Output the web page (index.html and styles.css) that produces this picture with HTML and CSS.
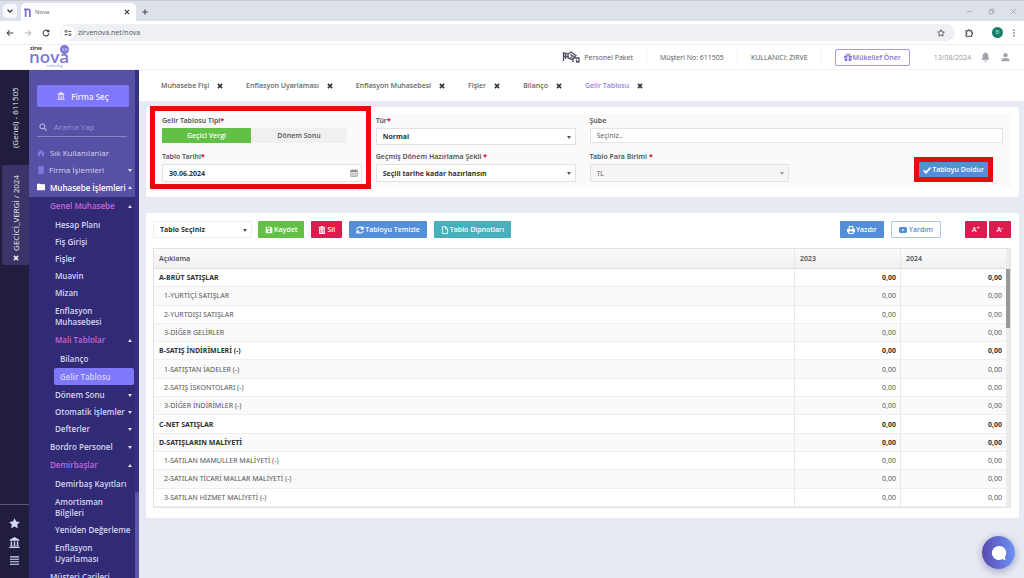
FILE: index.html
```html
<!DOCTYPE html>
<html lang="tr">
<head>
<meta charset="utf-8">
<title>Nova</title>
<link rel="stylesheet" href="styles.css">
</head>
<body>
<svg class="sprite" aria-hidden="true">
  <symbol id="bank" viewBox="0 0 16 16"><path d="M8 0 15 4v1.5H1V4zM2.5 6.500h2V12h-2zM7 6.500h2V12H7zM11.500 6.500h2V12h-2zM1.500 12.500h13v1H1.500zM.5 14.300h15V16H.5z"/></symbol>
  <symbol id="x" viewBox="0 0 10 10"><path d="M1.500 1.500l7 7M8.500 1.500l-7 7" fill="none" stroke="currentColor" stroke-width="2.600"/></symbol>
</svg>

<div class="strip">
  <button class="tab-search" aria-label="Sekme ara"><svg viewBox="0 0 10 10"><path d="M2 3.500l3 3 3-3" fill="none" stroke="currentColor" stroke-width="1.600"/></svg></button>
  <div class="btab">
    <svg class="favicon" viewBox="0 0 8 10"><path d="M0 1.500h5a1.700 1.700 0 0 1 1.700 1.700V10M1.900 10V1.500" fill="none" stroke="#7d72cf" stroke-width="2"/></svg>
    <span class="btab-title">Nova</span>
    <button aria-label="Sekmeyi kapat"><svg class="i6" viewBox="0 0 10 10"><path d="M1.500 1.500l7 7M8.500 1.500l-7 7" stroke="currentColor" stroke-width="1.800"/></svg></button>
  </div>
  <button class="newtab" aria-label="Yeni sekme"><svg class="i6" viewBox="0 0 10 10"><path d="M5 .5v9M.5 5h9" stroke="currentColor" stroke-width="1.500"/></svg></button>
  <div class="winctl">
    <button aria-label="Simge durumu"><svg viewBox="0 0 10 10"><path d="M1 5h8" stroke="currentColor"/></svg></button>
    <button aria-label="Geri yükle"><svg viewBox="0 0 10 10"><path d="M1.500 3.500h5v5h-5zM3.500 3.500v-2h5v5h-2" fill="none" stroke="currentColor"/></svg></button>
    <button aria-label="Kapat"><svg viewBox="0 0 10 10"><path d="M1 1l8 8M9 1l-8 8" stroke="currentColor"/></svg></button>
  </div>
</div>

<div class="toolbar">
  <button aria-label="Geri"><svg viewBox="0 0 12 12"><path d="M11 6H2M5.500 2 1.700 6l3.800 4" fill="none" stroke="currentColor" stroke-width="1.600"/></svg></button>
  <button class="dim" aria-label="İleri"><svg viewBox="0 0 12 12"><path d="M1 6h9M6.500 2l3.800 4-3.800 4" fill="none" stroke="currentColor" stroke-width="1.600"/></svg></button>
  <button aria-label="Yenile"><svg viewBox="0 0 12 12"><path d="M10.300 6.500A4.300 4.300 0 1 1 9 2.900l1 1M10.500 1v3.200H7.300" fill="none" stroke="currentColor" stroke-width="1.600"/></svg></button>
  <div class="omni">
    <span class="site"><svg viewBox="0 0 12 12"><path d="M6.500 3.500H11M1 8.500h4.500" stroke="currentColor" stroke-width="1.500"/><circle cx="3" cy="3.500" r="1.500" fill="none" stroke="currentColor" stroke-width="1.300"/><circle cx="9" cy="8.500" r="1.500" fill="none" stroke="currentColor" stroke-width="1.300"/></svg></span>
    <input aria-label="Adres" value="zirvenova.net/nova">
    <button aria-label="Yer işareti"><svg viewBox="0 0 12 12"><path d="M6 1l1.500 3.300 3.600.4-2.700 2.400.8 3.600L6 8.900l-3.200 1.800.8-3.600L.9 4.700l3.600-.4z" fill="none" stroke="currentColor" stroke-width="1.200"/></svg></button>
  </div>
  <button class="ext" aria-label="Uzantılar"><svg viewBox="0 0 12 12"><path d="M1.500 2.800h2.800a1.500 1.500 0 0 1 3 0H10v2.500a1.500 1.500 0 0 1 0 3V11H1.500V8.300a1.400 1.400 0 0 0 0-2.800z" fill="none" stroke="currentColor" stroke-width="1.600"/></svg></button>
  <span class="avatar">B</span>
  <button class="dots" aria-label="Menü"><svg viewBox="0 0 12 12"><circle cx="6" cy="2" r="1.100"/><circle cx="6" cy="6" r="1.100"/><circle cx="6" cy="10" r="1.100"/></svg></button>
</div>

<header class="top">
  <div class="logo"><span class="l-small">zirve</span><span class="l-big">nova</span><span class="l-badge">2.0</span><span class="l-tag">teknoloji</span></div>
  <div class="topinfo">
    <span class="cell"><svg class="plane" viewBox="0 0 18 12"><path d="M1.500 1v9M3.500 2v6M1 2.500h4.500M1 5.500h6M6 3l3-2 5 3.500-4 4-4-1.500zM8 3.500l3 1.500-3 2M12 7h5v4h-2.500V8.500M11 8v3" fill="none" stroke="#55505f" stroke-width="1.300"/></svg>Personel Paket</span>
    <span class="cell">Müşteri No: 611505</span>
    <span class="cell">KULLANICI: ZIRVE</span>
    <span class="cell"><button class="suggest"><svg viewBox="0 0 12 12"><path d="M0 4h5v3H0zM7 4h5v3H7zM1 8h4v4H1zM7 8h4v4H7z"/><path d="M6 4C4 4 2 3 3 1.500S6 2 6 4c0-2 2-4 3-2.500S8 4 6 4" fill="none" stroke="currentColor" stroke-width="1.200"/></svg>Mükellef Öner</button></span>
    <span class="date">13/08/2024</span>
    <button class="ico" aria-label="Bildirimler"><svg viewBox="0 0 12 14"><path d="M6 0l1 1.400C9.200 2 10 3.800 10 6c0 3 .7 4 2 5H0c1.300-1 2-2 2-5 0-2.200.8-4 3-4.600zM4.300 12h3.400a1.700 1.700 0 0 1-3.400 0z"/></svg></button>
    <button class="ico" aria-label="Profil"><svg viewBox="0 0 12 14"><circle cx="6" cy="4.500" r="3"/><path d="M0 13c0-3.500 2.500-4.500 6-4.500s6 1 6 4.500z"/></svg></button>
  </div>
</header>

<div class="app">
  <aside class="rail">
    <a href="#" class="vert">(Genel) - 611505</a>
    <div class="vtab"><a href="#" class="vert">GECİCİ_VERGİ / 2024</a><button aria-label="Kapat"><svg class="i6"><use href="#x"/></svg></button></div>
    <div class="railicons">
      <button aria-label="Favoriler"><svg viewBox="0 0 12 12"><path d="M6 .2l1.800 3.700 4.100.5-3 2.800.8 4.100L6 9.300l-3.700 2 .8-4.100-3-2.800 4.100-.5z"/></svg></button>
      <button aria-label="Firmalar"><svg><use href="#bank"/></svg></button>
      <button aria-label="Menü"><svg viewBox="0 0 12 12"><path d="M1 2h10M1 4.700h10M1 7.400h10M1 10.100h10" stroke="currentColor" stroke-width="1.200"/></svg></button>
    </div>
  </aside>

  <nav class="side">
    <div class="sidetop">
      <button class="firm"><svg><use href="#bank"/></svg>Firma Seç</button>
      <label class="search"><svg viewBox="0 0 12 12"><circle cx="5" cy="5" r="3.700" fill="none" stroke="currentColor" stroke-width="1.500"/><path d="M7.800 7.800l3.500 3.500" stroke="currentColor" stroke-width="1.700"/></svg><input placeholder="Arama Yap" aria-label="Arama Yap"></label>
      <a href="#" class="root"><svg viewBox="0 0 12 12"><path d="M6 1l6 5.500h-1.500V11H7.500V8h-3v3h-3V6.500H0z"/></svg>Sık Kullanılanlar</a>
      <a href="#" class="root tight down"><svg viewBox="0 0 12 12"><path d="M2 0h8v12H2z"/></svg>Firma İşlemleri</a>
      <a href="#" class="root on up"><svg viewBox="0 0 12 12"><path d="M0 1h5l1 1h6v9H0z"/></svg>Muhasebe İşlemleri</a>
    </div>
    <div class="menu">
      <a href="#" class="l1 pink up">Genel Muhasebe</a>
      <div class="sub">
        <a href="#">Hesap Planı</a><a href="#">Fiş Girişi</a><a href="#">Fişler</a><a href="#">Muavin</a><a href="#">Mizan</a>
        <a href="#" class="two">Enflasyon<br>Muhasebesi</a>
        <a href="#" class="two pink up">Mali Tablolar</a>
        <div class="sub2"><a href="#">Bilanço</a><a href="#" class="active">Gelir Tablosu</a></div>
        <a href="#" class="down">Dönem Sonu</a><a href="#" class="down">Otomatik İşlemler</a><a href="#" class="down">Defterler</a>
      </div>
      <a href="#" class="l1 down">Bordro Personel</a>
      <a href="#" class="l1 pink up">Demirbaşlar</a>
      <div class="sub">
        <a href="#">Demirbaş Kayıtları</a><a href="#" class="two">Amortisman<br>Bilgileri</a><a href="#">Yeniden Değerleme</a><a href="#" class="two">Enflasyon<br>Uyarlaması</a>
      </div>
      <a href="#" class="l1">Müşteri Carileri</a>
    </div>
    <div class="sidebar-scroll"><i></i></div>
  </nav>

  <main>
    <div class="tabs">
      <span><a href="#">Muhasebe Fişi</a><button aria-label="Kapat"><svg class="i6"><use href="#x"/></svg></button></span>
      <span><a href="#">Enflasyon Uyarlaması</a><button aria-label="Kapat"><svg class="i6"><use href="#x"/></svg></button></span>
      <span><a href="#">Enflasyon Muhasebesi</a><button aria-label="Kapat"><svg class="i6"><use href="#x"/></svg></button></span>
      <span><a href="#">Fişler</a><button aria-label="Kapat"><svg class="i6"><use href="#x"/></svg></button></span>
      <span><a href="#">Bilanço</a><button aria-label="Kapat"><svg class="i6"><use href="#x"/></svg></button></span>
      <span><a href="#" class="cur">Gelir Tablosu</a><button aria-label="Kapat"><svg class="i6"><use href="#x"/></svg></button></span>
    </div>

    <section class="card filters">
      <form class="grid">
        <div class="field marked">
          <span class="lab">Gelir Tablosu Tipi<b>*</b></span>
          <div class="seg"><button type="button" class="sel">Geçici Vergi</button><button type="button">Dönem Sonu</button></div>
          <label for="tarih" class="lab second">Tablo Tarihi<b>*</b></label>
          <div class="datebox"><input id="tarih" value="30.06.2024"><button type="button" aria-label="Takvim"><svg viewBox="0 0 12 12"><path d="M1 2h10v9.500H1zM3.500 0v3M8.500 0v3" fill="none" stroke="#888"/><path d="M1 2h10v2.500H1z" fill="#888"/><path d="M1 7h10M1 9.300h10M3.500 4v8M6 4v8M8.500 4v8" stroke="#999" stroke-width=".7"/></svg></button></div>
        </div>
        <div class="field">
          <label for="tur" class="lab">Tür<b>*</b></label>
          <div class="drop"><select id="tur"><option>Normal</option></select></div>
          <label for="sekil" class="lab second">Geçmiş Dönem Hazırlama Şekli <b>*</b></label>
          <div class="drop"><select id="sekil"><option>Seçili tarihe kadar hazırlansın</option></select></div>
        </div>
        <div class="field wide">
          <label for="sube" class="lab">Şube</label>
          <input id="sube" class="box" value="Seçiniz..">
          <div class="halves">
            <div>
              <label for="para" class="lab second">Tablo Para Birimi <b>*</b></label>
              <div class="drop off"><select id="para"><option>TL</option></select></div>
            </div>
            <div class="fill"><button type="button" class="btn blue"><svg viewBox="0 0 12 12"><path d="M1 6.500l3.500 3.500L11 2.500" fill="none" stroke="currentColor" stroke-width="2.500"/></svg>Tabloyu Doldur</button></div>
          </div>
        </div>
      </form>
    </section>

    <section class="card data">
      <div class="actions">
        <div class="drop pick"><select aria-label="Tablo Seçiniz"><option>Tablo Seçiniz</option></select></div>
        <button class="btn green"><svg viewBox="0 0 12 12"><path fill-rule="evenodd" d="M1 1h8l2 2v8H1zM3 2.300v2.400h5V2.300zM6 6.200a1.700 1.700 0 1 0 .01 0z"/></svg>Kaydet</button>
        <button class="btn red"><svg viewBox="0 0 12 12"><path fill-rule="evenodd" d="M1 1h3l.7-1h2.600L8 1h3v1.500H1zM1.700 3.500h8.600V12H1.700zM3.600 5v5.500h.8V5zM5.600 5v5.500h.8V5zM7.600 5v5.500h.8V5z"/></svg>Sil</button>
        <button class="btn blue"><svg viewBox="0 0 12 12"><path d="M1 5.200A5 5 0 0 1 10 3.500M11 6.800A5 5 0 0 1 2 8.500M10.700.8v3.500H7.200M1.300 11.200V7.700h3.500" fill="none" stroke="currentColor" stroke-width="1.700"/></svg>Tabloyu Temizle</button>
        <button class="btn teal"><svg viewBox="0 0 12 12"><path d="M2 1h5l3 3v7.200H2zM6.700 1v3.500H10" fill="none" stroke="currentColor" stroke-width="1.300"/></svg>Tablo Dipnotları</button>
        <span class="grow"></span>
        <button class="btn blue"><svg viewBox="0 0 12 12"><path fill-rule="evenodd" d="M2.500 0h7v4H11l1 1v4.500h-2V12H2V9.500H0V5l1-1h1.500zM4 1.500V5h4V1.500zM3.500 8v2.600h5V8z"/></svg>Yazdır</button>
        <button class="btn ghost"><svg viewBox="0 0 12 12"><path fill-rule="evenodd" d="M1.500 1.500h9L12 3v6l-1.500 1.500h-9L0 9V3zM4.800 4v4l3.400-2z"/></svg>Yardım</button>
        <span class="sizes"><button class="btn red">A<sup>+</sup></button><button class="btn red">A<sup>-</sup></button></span>
      </div>
      <div class="sheet">
        <table>
          <thead><tr><th>Açıklama</th><th class="yr">2023</th><th class="yr">2024</th></tr></thead>
          <tbody>
            <tr class="h"><td>A-BRÜT SATIŞLAR</td><td>0,00</td><td>0,00</td></tr>
            <tr><td>1-YURTİÇİ SATIŞLAR</td><td>0,00</td><td>0,00</td></tr>
            <tr><td>2-YURTDIŞI SATIŞLAR</td><td>0,00</td><td>0,00</td></tr>
            <tr><td>3-DİĞER GELİRLER</td><td>0,00</td><td>0,00</td></tr>
            <tr class="h"><td>B-SATIŞ İNDİRİMLERİ (-)</td><td>0,00</td><td>0,00</td></tr>
            <tr><td>1-SATIŞTAN İADELER (-)</td><td>0,00</td><td>0,00</td></tr>
            <tr><td>2-SATIŞ İSKONTOLARI (-)</td><td>0,00</td><td>0,00</td></tr>
            <tr><td>3-DİĞER İNDİRİMLER (-)</td><td>0,00</td><td>0,00</td></tr>
            <tr class="h"><td>C-NET SATIŞLAR</td><td>0,00</td><td>0,00</td></tr>
            <tr class="h"><td>D-SATIŞLARIN MALİYETİ</td><td>0,00</td><td>0,00</td></tr>
            <tr><td>1-SATILAN MAMULLER MALİYETİ (-)</td><td>0,00</td><td>0,00</td></tr>
            <tr><td>2-SATILAN TİCARİ MALLAR MALİYETİ (-)</td><td>0,00</td><td>0,00</td></tr>
            <tr><td>3-SATILAN HİZMET MALİYETİ (-)</td><td>0,00</td><td>0,00</td></tr>
          </tbody>
        </table>
        <div class="track"><i></i></div>
      </div>
    </section>
    <button class="chat" aria-label="Sohbet"><svg viewBox="0 0 16 16"><path d="M8 1a7 7 0 1 0 3.500 13c1 .8 2.500 1 3.500.7-.8-.6-1-1.500-1-2.800A7 7 0 0 0 8 1z"/></svg></button>
  </main>
</div>
</body>
</html>
```
FILE: styles.css
```css
* { box-sizing: border-box; }
body { margin: 0; height: 100vh; overflow: hidden; display: flex; flex-direction: column; font: 7px/11px "Open Sans", "Noto Sans", sans-serif; color: #444; background: #fff; }
button, input, select { font: inherit; color: inherit; margin: 0; padding: 0; border: 0; background: none; border-radius: 0; outline: 0; min-width: 0; }
button { display: inline-flex; align-items: center; justify-content: center; white-space: nowrap; }
a { color: inherit; text-decoration: none; white-space: nowrap; }
svg { fill: currentColor; display: block; flex: none; width: 8px; height: 8px; }
.sprite { position: absolute; width: 0; height: 0; }
.i6 { width: 6px; height: 6px; }

.strip { height: 21px; flex: none; display: flex; align-items: flex-end; background: #dde1ea; border-top: 1px solid #c9ccd3; color: #333; }
.tab-search { width: 14px; height: 14px; margin: 0 4px 3px 3px; background: #f7f9fd; border-radius: 4px; }
.btab { width: 115px; height: 18px; display: flex; align-items: center; padding: 0 6px 0 3px; gap: 4px; background: #fff; border-radius: 5px 5px 0 0; }
.favicon { width: 7px; height: 9px; }
.btab-title { flex: 1; color: #666; font-size: 6px; }
.newtab { width: 18px; height: 18px; }
.winctl { margin-left: auto; display: flex; gap: 15px; padding: 0 7px 6px 0; color: #9a9da5; }
.winctl svg { width: 7px; height: 7px; }

.toolbar { height: 24px; flex: none; display: flex; align-items: center; gap: 10px; padding: 0 6px; border-bottom: 1px solid #eceef2; color: #444; }
.toolbar .dim { color: #b5b7bd; }
.omni { flex: 1; display: flex; align-items: center; gap: 3px; height: 17px; padding: 0 10px 0 1px; border-radius: 9px; background: #eef0f6; }
.site { width: 14px; height: 14px; border-radius: 7px; background: #fff; display: flex; align-items: center; justify-content: center; }
.omni input { flex: 1; color: #555; }
.ext { margin-right: 9px; }
.avatar { width: 11px; height: 11px; border-radius: 50%; background: #15806a; color: #b5e0d5; font-size: 6px; text-align: center; }
.dots { margin-left: -3px; }

.top { height: 25px; flex: none; display: flex; justify-content: space-between; align-items: center; padding: 0 14px 0 29px; border-bottom: 1px solid #f1f1f4; color: #555; }
.logo { position: relative; width: 42px; height: 25px; color: #7f75d6; }
.logo span { position: absolute; }
.l-small { left: 1px; top: 0; font-size: 5px; line-height: 6px; font-weight: 700; color: #333; }
.l-big { left: 0; top: 3px; font-size: 17px; line-height: 17px; font-weight: 600; }
.l-badge { left: 31px; top: 0; width: 9px; height: 9px; border-radius: 50%; background: #7f75d6; color: #fff; font-size: 4px; line-height: 9px; text-align: center; }
.l-tag { left: 18px; top: 18px; font-size: 4px; line-height: 6px; }
.topinfo { display: flex; align-items: center; }
.cell { display: flex; align-items: center; height: 16px; padding: 0 13px; border-right: 1px solid #f3f3f5; }
.cell:nth-child(4) { border: 0; padding-right: 24px; }
.plane { width: 18px; height: 12px; margin-right: 4px; }
.suggest { height: 17px; padding: 0 8px; gap: 1px; border: 1px solid #a29bea; border-radius: 2px; color: #7d73dc; font-weight: 600; }
.date { color: #999; margin-right: 9px; }
.ico { color: #a0a3ac; width: 10px; }
.ico + .ico { margin-left: 10px; }
.ico svg { width: 9px; height: 10px; }

.app { flex: 1; display: flex; min-height: 0; }
.rail { width: 29px; flex: none; display: flex; flex-direction: column; background: #201d3f; color: #eee; font-size: 8px; }
.vert { writing-mode: vertical-rl; transform: rotate(180deg); align-self: center; }
.rail > .vert { height: 95px; padding: 17px 0 19px; }
.vtab { height: 100px; display: flex; flex-direction: column; align-items: center; gap: 4px; margin-left: 2px; padding-top: 10px; background: #3a3469; border-radius: 2px 0 0 2px; }
.railicons { margin-top: auto; border-top: 1px solid #5c5979; height: 74px; padding: 13px 0 12px; display: flex; flex-direction: column; align-items: center; justify-content: space-between; color: #d5daf5; }
.railicons svg { width: 11px; height: 11px; }

.side { position: relative; width: 110px; flex: none; display: flex; flex-direction: column; background: #312b76; color: #d4d4ee; font-size: 8px; font-weight: 600; overflow: hidden; }
.sidetop { background: #5651a4; padding: 15px 10px 1px 8px; display: flex; flex-direction: column; flex: none; }
.firm { height: 22px; gap: 6px; background: #7f78fa; border-radius: 2px; color: #eee; }
.search { display: flex; align-items: center; gap: 7px; height: 20px; margin: 10px 2px 7px 0; padding-left: 2px; border-bottom: 1px solid #8a86c4; color: #c9c8ea; }
.search input { flex: 1; font-weight: 400; }
.search input::placeholder { color: #9995d3; opacity: 1; }
.root { display: flex; align-items: center; gap: 5px; height: 17px; position: relative; font-weight: 500; }
.root svg { color: #7e78dd; }
.root.tight { gap: 4px; }
.root.on { height: 18px; color: #fff; font-weight: 600; }
.root.on svg { color: #fff; }
.menu { display: flex; flex-direction: column; }
.menu a { display: block; position: relative; padding: 3px 0 3px 26px; }
.menu .l1 { padding-left: 21px; padding-bottom: 4px; }
.menu .pink { color: #c564da; }
.sub { padding: 1px 0; }
.menu .two { margin-top: 1px; }
.sub2 { padding-top: 2px; }
.menu .sub2 a { margin: 0 5px 1px 25px; padding-left: 6px; border-radius: 2px; }
.menu .sub2 .active { background: #7f78fa; }
.up::after, .down::after { content: ""; position: absolute; right: 7px; top: 8px; border: 2px solid transparent; }
.root.up::after, .root.down::after { right: -3px; }
.up::after { border-bottom: 3px solid #dcdcf2; border-top: 0; }
.down::after { border-top: 3px solid #dcdcf2; border-bottom: 0; }
.sidebar-scroll { position: absolute; right: 0; top: 0; bottom: 0; width: 4px; background: #37307c; display: flex; align-items: flex-end; }
.sidebar-scroll i { width: 100%; height: 86px; background: #5a55a5; }

main { flex: 1; min-width: 0; display: flex; flex-direction: column; background: #e8eaf3; }
.tabs { height: 31px; flex: none; display: flex; align-items: center; gap: 23px; padding-left: 22px; background: #fff; font-weight: 600; color: #666; }
.tabs span { display: flex; align-items: center; gap: 8px; }
.tabs svg { color: #333; }
.tabs .cur { color: #8f84e0; }
.card { background: #fff; border-radius: 2px; margin: 6px 5px 0 7px; }
.filters { padding: 7px 8px 10px; }
.grid { display: grid; grid-template-columns: repeat(4, 1fr); column-gap: 14px; padding: 0 8px 5px; background: #fafafa; }
.field { position: relative; }
.wide { grid-column: span 2; }
.marked::after { content: ""; position: absolute; left: -12px; right: -9px; top: -8px; bottom: -7px; border: 5px solid #e60c0c; pointer-events: none; }
.lab { display: block; height: 14px; line-height: 13px; font-family: "Noto Sans", "Open Sans", sans-serif; font-weight: 600; color: #555; }
.lab b { color: #d0213c; }
.lab.second { margin-top: 5px; }
.seg { display: flex; width: 185px; height: 17px; padding-bottom: 2px; }
.seg button { flex: 1; background: #f0f0f0; color: #555; font-weight: 600; }
.seg .sel { background: #62c046; color: #fff; flex: 0 0 89px; }
.datebox, .drop, .box { display: flex; height: 18px; width: 100%; background: #fff; border: 1px solid #e2e2e2; }
.datebox input, .drop select { flex: 1; padding-left: 6px; color: #333; font-weight: 700; appearance: none; }
.datebox button { width: 14px; }
.drop { position: relative; }
.drop::after { content: ""; position: absolute; right: 4px; top: 7px; border: 2px solid transparent; border-top: 3px solid #555; border-bottom: 0; pointer-events: none; }
.field > .drop:nth-child(2) { height: 17px; }
.box { height: 15px; margin-bottom: 2px; padding-left: 6px; color: #555; }
.off { background: #f6f4f5; }
.drop.off select { font-weight: 400; color: #555; }
.off::after { border-top-color: #999; }
.halves { display: grid; grid-template-columns: 1fr 1fr; gap: 14px; }
.fill { display: flex; justify-content: flex-end; align-items: flex-end; padding: 0 15px 4px 0; }
.fill .btn { position: relative; padding: 0 4px; }
.fill .btn::after { content: ""; position: absolute; inset: -4px -5px; border: 5px solid #e60c0c; pointer-events: none; }

.btn { height: 17px; gap: 1px; padding: 0 7px; border-radius: 1px; color: #fff; font-weight: 600; }
.green { background: #62c046; }
.red { background: #d91e4f; }
.blue { background: #548edb; }
.teal { background: #48b0bd; }
.ghost { background: #fff; border: 1px solid #a9c6ea; color: #548edb; gap: 2px; }
.data { margin-top: 16px; padding: 8px 8px 10px 7px; }
.actions { display: flex; gap: 7px; height: 17px; margin-bottom: 10px; }
.pick.drop { width: 99px; height: 17px; border-color: #eee; margin-right: -1px; }
.grow { flex: 1; }
.sizes { display: flex; gap: 2px; margin-left: 17px; }
.sizes .btn { width: 22px; padding: 0; gap: 0; }
sup { font-size: 6px; line-height: 6px; margin-bottom: 4px; }
.sheet { display: flex; border: 1px solid #e3e3e3; }
table { flex: 1; height: 258px; border-collapse: separate; border-spacing: 0; table-layout: fixed; color: #555; font-family: "Noto Sans", "Open Sans", sans-serif; }
th { height: 20px; text-align: left; font-weight: 600; padding: 0 5px; color: #555; background: linear-gradient(#fafafa, #f1f1f1); border-bottom: 1px solid #ddd; }
.yr { width: 106px; }
th + th, td + td { border-left: 1px solid #e8e8e8; }
td { padding: 0 4px 0 10px; border-bottom: 1px solid #eee; }
tbody tr:nth-child(even) td { background: #fafafa; }
td + td { text-align: right; }
.h td { font-weight: 700; color: #333; }
.h td:first-child { padding-left: 5px; }
.track { width: 4px; padding-top: 20px; background: #ececec; }
.track i { display: block; height: 59px; background: #999; }

.chat { position: fixed; right: 9px; bottom: 9px; width: 33px; height: 33px; border-radius: 50%; color: #fff; background: linear-gradient(90deg, #5a48ae, #6d92f5); box-shadow: 0 2px 8px #9a9dbb; }
.chat svg { width: 16px; height: 16px; }
```
